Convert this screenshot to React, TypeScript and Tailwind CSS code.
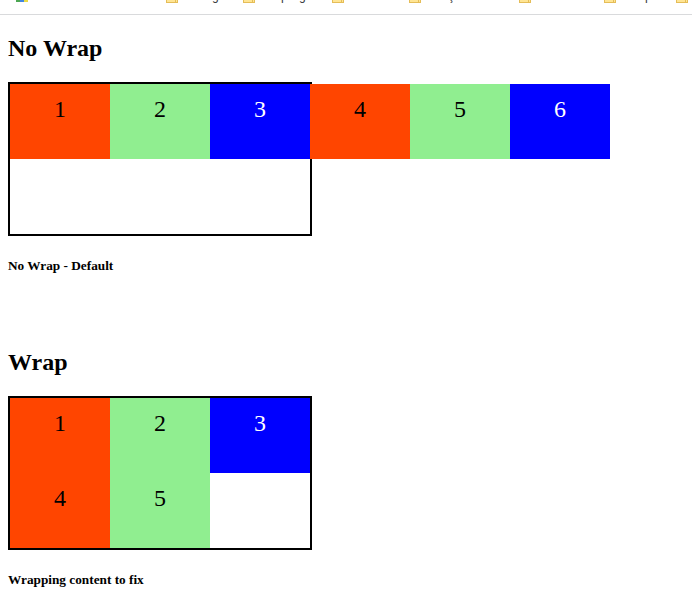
import React from "react";

type Bookmark = { width: string; letters: { char: string; gap: string }[] };

const bookmarks: Bookmark[] = [
  { width: "w-[77px]", letters: [{ char: "g", gap: "ml-[34px]" }] },
  {
    width: "w-[89px]",
    letters: [
      { char: "p", gap: "ml-[26px]" },
      { char: "g", gap: "ml-[11px]" },
    ],
  },
  { width: "w-[77px]", letters: [] },
  { width: "w-[110px]", letters: [{ char: "ç", gap: "ml-[27px]" }] },
  { width: "w-[85px]", letters: [] },
  { width: "w-[72px]", letters: [{ char: "p", gap: "ml-[29px]" }] },
  { width: "w-[16px]", letters: [] },
];

const tones = [
  "bg-[orangered] text-black",
  "bg-[lightgreen] text-black",
  "bg-[blue] text-white",
];

function BookmarksBar() {
  return (
    <div className="flex h-[15px] overflow-hidden border-b border-[#d9dadc] font-['Roboto',sans-serif]">
      <div className="ml-4 flex h-[2px] w-[150px] shrink-0">
        <span className="w-1 bg-[#4ca653]" />
        <span className="w-1 bg-[#4285e0]" />
        <span className="w-1 bg-[#eadb45]" />
      </div>
      {bookmarks.map((b, i) => (
        <div key={i} className={`flex shrink-0 items-start ${b.width}`}>
          <span className="flex h-[3px] w-3 shrink-0 justify-end border-x border-b border-[#e5bd58] bg-[#ffe594]">
            <span className="mr-px w-px bg-[#e5bd58]" />
          </span>
          {b.letters.map((l, j) => (
            <span
              key={j}
              className={`-mt-[10px] w-[7px] shrink-0 text-[12px] leading-[12px] text-[#3c4043] ${l.gap}`}
            >
              {l.char}
            </span>
          ))}
        </div>
      ))}
    </div>
  );
}

function Demo({
  title,
  caption,
  count,
  wrap,
}: {
  title: string;
  caption: string;
  count: number;
  wrap?: boolean;
}) {
  return (
    <section>
      <h2 className="text-[24px] leading-[27px] font-bold">{title}</h2>
      <div
        className={`mt-5 flex h-[154px] w-[304px] content-start items-start border-2 border-black ${wrap ? "flex-wrap" : "flex-nowrap"}`}
      >
        {Array.from({ length: count }, (_, i) => (
          <div
            key={i}
            className={`h-[75px] w-[100px] shrink-0 pt-3 text-center text-[24px] leading-[27px] ${tones[i % 3]}`}
          >
            {i + 1}
          </div>
        ))}
      </div>
      <h5 className="mt-[22px] text-[13.28px] leading-[15px] font-bold">{caption}</h5>
    </section>
  );
}

export default function App() {
  return (
    <div className="h-[613px] overflow-hidden bg-white font-['Liberation_Serif',serif] text-black">
      <BookmarksBar />
      <main className="flex flex-col gap-[76px] px-2 pt-5">
        <Demo title="No Wrap" caption="No Wrap - Default" count={6} />
        <Demo title="Wrap" caption="Wrapping content to fix" count={5} wrap />
      </main>
    </div>
  );
}
